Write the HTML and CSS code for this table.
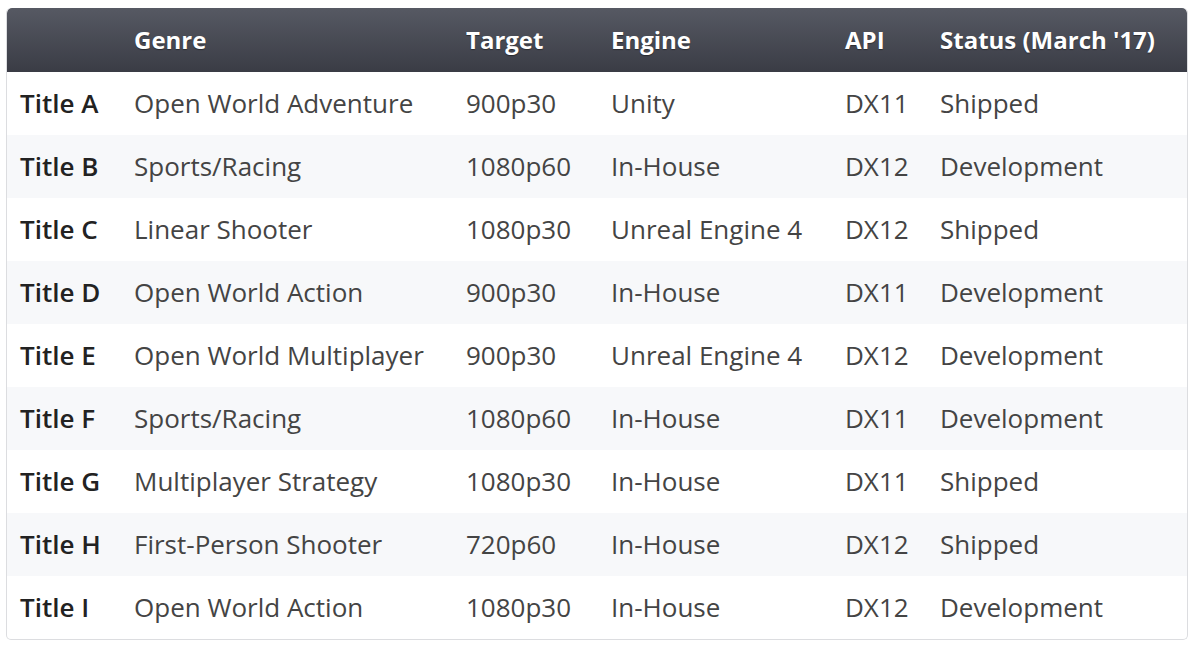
FILE: index.html
```html
<!DOCTYPE html>
<html>
<head>
<meta charset="utf-8">
<link rel="stylesheet" href="styles.css">
</head>
<body>
<div class="wrap">
<table class="grid">
<colgroup>
<col class="c1"><col class="c2"><col class="c3"><col class="c4"><col class="c5"><col class="c6">
</colgroup>
<thead>
<tr><th></th><th>Genre</th><th>Target</th><th>Engine</th><th>API</th><th>Status (March '17)</th></tr>
</thead>
<tbody>
<tr><td class="t">Title A</td><td>Open World Adventure</td><td>900p30</td><td>Unity</td><td>DX11</td><td>Shipped</td></tr>
<tr><td class="t">Title B</td><td>Sports/Racing</td><td>1080p60</td><td>In-House</td><td>DX12</td><td>Development</td></tr>
<tr><td class="t">Title C</td><td>Linear Shooter</td><td>1080p30</td><td>Unreal Engine 4</td><td>DX12</td><td>Shipped</td></tr>
<tr><td class="t">Title D</td><td>Open World Action</td><td>900p30</td><td>In-House</td><td>DX11</td><td>Development</td></tr>
<tr><td class="t">Title E</td><td>Open World Multiplayer</td><td>900p30</td><td>Unreal Engine 4</td><td>DX12</td><td>Development</td></tr>
<tr><td class="t">Title F</td><td>Sports/Racing</td><td>1080p60</td><td>In-House</td><td>DX11</td><td>Development</td></tr>
<tr><td class="t">Title G</td><td>Multiplayer Strategy</td><td>1080p30</td><td>In-House</td><td>DX11</td><td>Shipped</td></tr>
<tr><td class="t">Title H</td><td>First-Person Shooter</td><td>720p60</td><td>In-House</td><td>DX12</td><td>Shipped</td></tr>
<tr><td class="t">Title I</td><td>Open World Action</td><td>1080p30</td><td>In-House</td><td>DX12</td><td>Development</td></tr>
</tbody>
</table>
</div>
</body>
</html>
```

FILE: styles.css
```css
html, body { margin: 0; padding: 0; background: #fff; }
.wrap { padding: 8px 12px 0 6px; }
.grid {
  width: 1182px;
  table-layout: fixed;
  border-collapse: separate;
  border-spacing: 0;
  border: 1px solid #dcdde0;
  border-top: none;
  border-radius: 5px;
  overflow: hidden;
  font-family: "Open Sans", "Liberation Sans", sans-serif;
  font-size: 26px;
}
.c1 { width: 114px; }
.c2 { width: 332px; }
.c3 { width: 145px; }
.c4 { width: 234px; }
.c5 { width: 95px; }
.c6 { width: auto; }
th, td { text-align: left; padding: 0 0 0 13px; white-space: nowrap; }
thead th {
  height: 63px;
  padding-bottom: 1px;
  background: linear-gradient(#565963, #3a3c45);
  color: #fff;
  font-size: 24px;
  font-weight: 700;
  text-shadow: 0 1px 1px rgba(0,0,0,0.4);
}
thead th:first-child { border-top-left-radius: 5px; }
thead th:last-child { border-top-right-radius: 5px; }
tbody td { height: 61px; padding-bottom: 2px; color: #444; }
tbody tr:nth-child(even) td { background: #f7f8fa; }
td.t { color: #222; font-weight: 600; }
```
